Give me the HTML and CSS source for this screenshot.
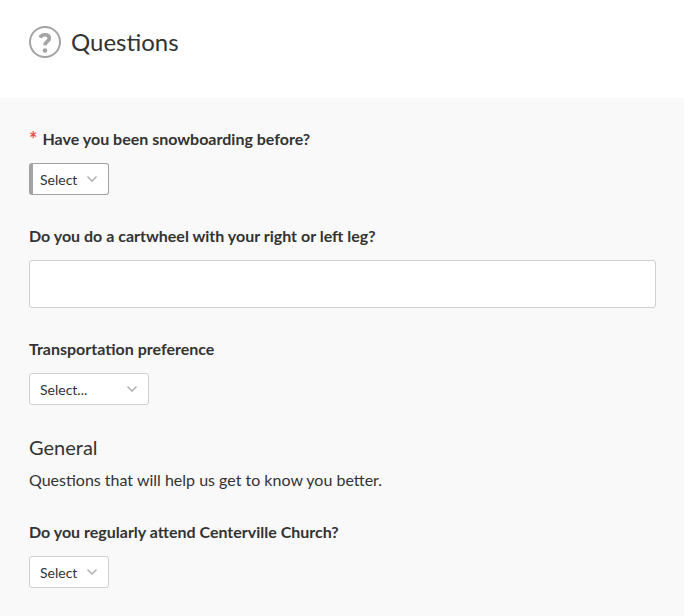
FILE: index.html
```html
<!DOCTYPE html>
<html lang="en">
<head>
    <meta charset="UTF-8">
    <meta name="viewport" content="width=device-width, initial-scale=1.0">
    <title>Questions</title>
    <link rel="stylesheet" href="styles.css">
</head>
<body>
    <header class="page-header">
        <svg class="header-icon" viewBox="0 0 32 32" aria-hidden="true">
            <circle cx="16" cy="16" r="15" fill="none" stroke="#a3a3a3" stroke-width="2"/>
            <path d="M11 11.500C12.200 9.500 13.800 8.700 15.900 8.700C18.800 8.700 20.300 10.200 20.300 12.300C20.300 15.500 16 15.300 16 19.300" fill="none" stroke="#a3a3a3" stroke-width="3.600"/>
            <circle cx="16" cy="24.500" r="2.300" fill="#a3a3a3"/>
        </svg>
        <h1>Questions</h1>
    </header>

    <main>
        <form class="questions">
            <div class="form-group">
                <label for="snowboarding"><span class="required">*</span>Have you been snowboarding before?</label>
                <div class="select is-required">
                    <select id="snowboarding" name="snowboarding" required>
                        <option value="">Select</option>
                        <option>Yes</option>
                        <option>No</option>
                    </select>
                    <svg class="chevron" viewBox="0 0 12 8" aria-hidden="true"><path d="M1.500 1.500l4.500 4.500 4.500-4.500"/></svg>
                </div>
            </div>

            <div class="form-group">
                <label for="cartwheel">Do you do a cartwheel with your right or left leg?</label>
                <input type="text" id="cartwheel" name="cartwheel">
            </div>

            <div class="form-group">
                <label for="transportation">Transportation preference</label>
                <div class="select select-wide">
                    <select id="transportation" name="transportation">
                        <option value="">Select...</option>
                    </select>
                    <svg class="chevron" viewBox="0 0 12 8" aria-hidden="true"><path d="M1.500 1.500l4.500 4.500 4.500-4.500"/></svg>
                </div>
            </div>

            <div class="section-heading">
                <h2>General</h2>
                <p>Questions that will help us get to know you better.</p>
            </div>

            <div class="form-group">
                <label for="church">Do you regularly attend Centerville Church?</label>
                <div class="select">
                    <select id="church" name="church">
                        <option value="">Select</option>
                        <option>Yes</option>
                        <option>No</option>
                    </select>
                    <svg class="chevron" viewBox="0 0 12 8" aria-hidden="true"><path d="M1.500 1.500l4.500 4.500 4.500-4.500"/></svg>
                </div>
            </div>
        </form>
    </main>
</body>
</html>
```
FILE: styles.css
```css
* {
    margin: 0;
    padding: 0;
    box-sizing: border-box;
}

body {
    font-family: Lato, sans-serif;
    font-size: 16px;
    line-height: 24px;
    background-color: #f9f9f9;
    color: #333;
}

/* Header */
.page-header {
    display: flex;
    align-items: center;
    gap: 10px;
    padding: 26px 28px 40px 29px;
    background-color: #fff;
}

.header-icon {
    width: 32px;
    height: 32px;
}

h1 {
    font-size: 24px;
    line-height: 32px;
    font-weight: 400;
}

/* Form */
.questions {
    padding: 29px 28px 0 29px;
}

.form-group {
    margin-bottom: 29px;
}

.form-group label {
    display: block;
    margin-bottom: 12px;
    font-weight: 700;
}

.required {
    margin-right: 5px;
    font-size: 20px;
    line-height: 24px;
    vertical-align: bottom;
    color: #e5554f;
}

.form-group input {
    display: block;
    width: 100%;
    height: 48px;
    padding: 10px;
    font: inherit;
    border: 1px solid #d0d0d0;
    border-radius: 3px;
    background-color: #fff;
}

.select {
    position: relative;
    width: 80px;
}

.select-wide {
    width: 120px;
}

.select select {
    display: block;
    width: 100%;
    height: 32px;
    padding: 0 10px;
    font-family: inherit;
    font-size: 14px;
    color: #333;
    appearance: none;
    border: 1px solid #d0d0d0;
    border-radius: 3px;
    background-color: #fff;
}

.select.is-required select {
    padding-left: 7px;
    border-color: #a3a3a3;
    border-left-width: 4px;
}

.chevron {
    position: absolute;
    top: 12px;
    right: 11px;
    width: 12px;
    height: 8px;
    fill: none;
    stroke: #b3b3b3;
    stroke-width: 1.6;
    pointer-events: none;
}

/* Section */
.section-heading {
    margin-bottom: 28px;
}

.section-heading h2 {
    margin-bottom: 8px;
    font-size: 20px;
    line-height: 26px;
    font-weight: 400;
}
```
